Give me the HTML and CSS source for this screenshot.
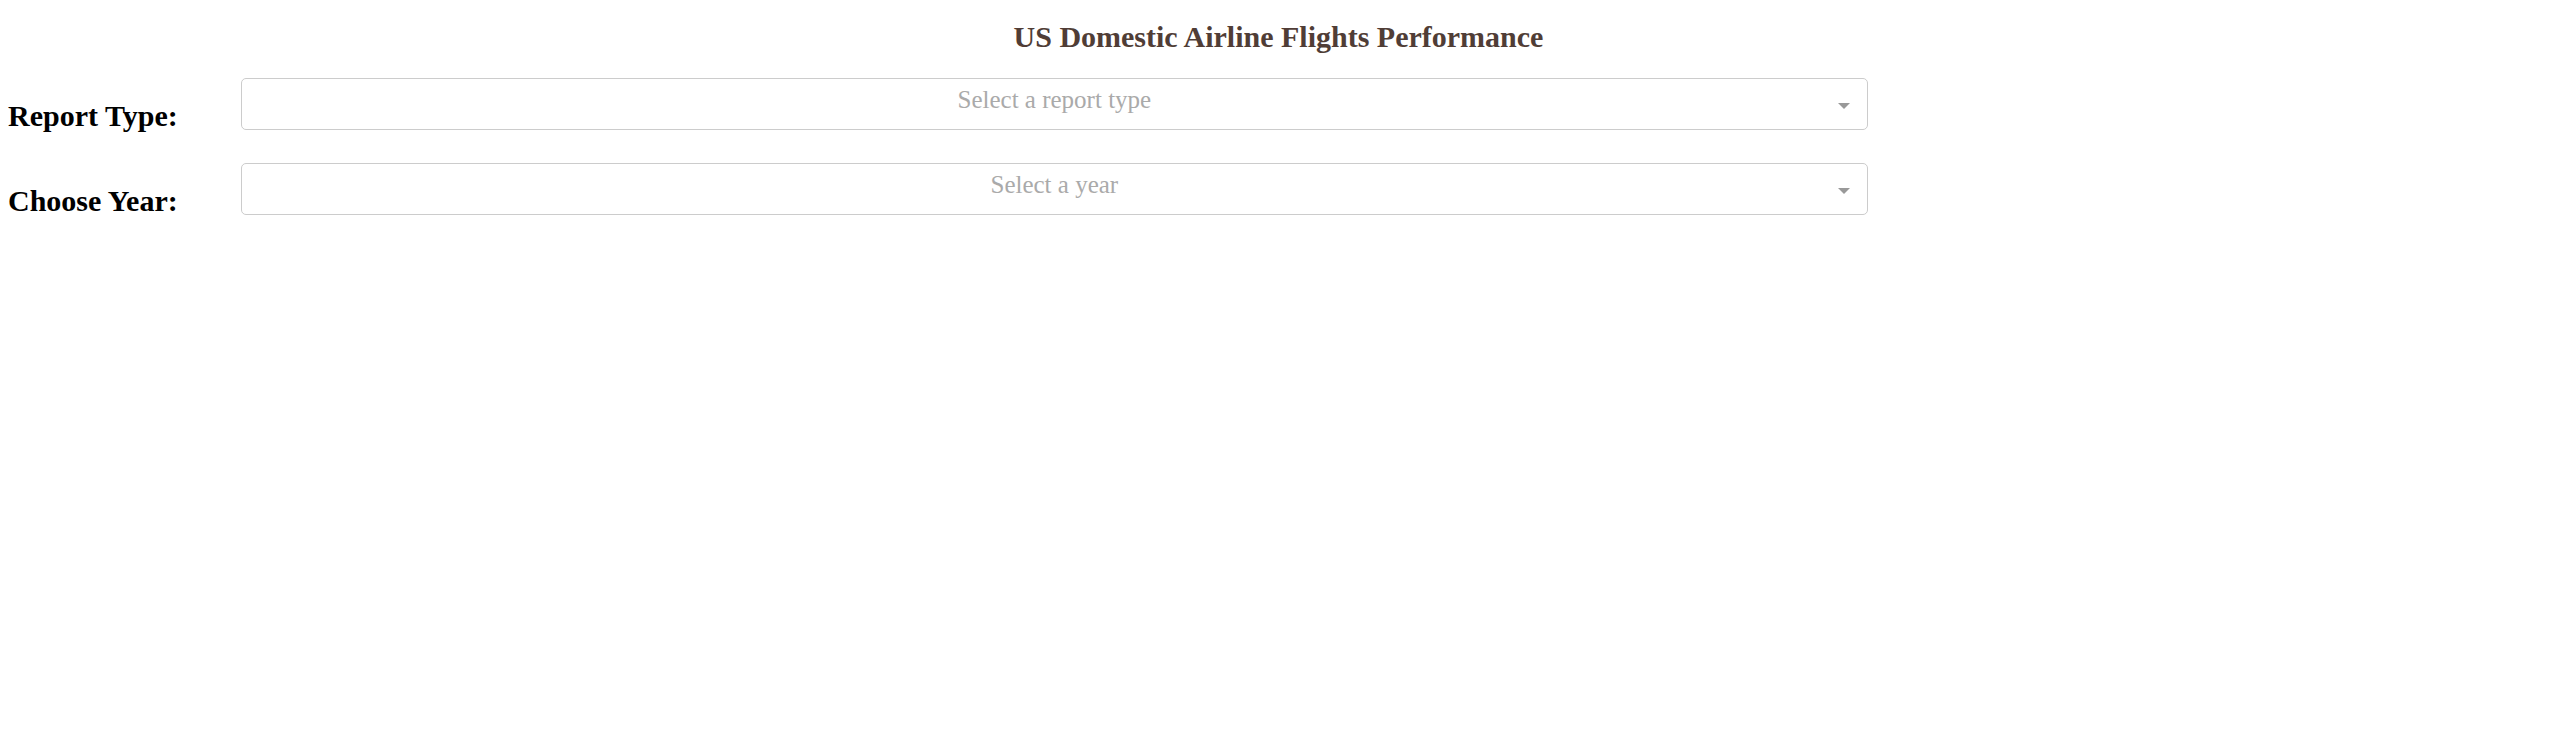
FILE: index.html
```html
<!DOCTYPE html>
<html lang="en">
<head>
<meta charset="utf-8">
<title>US Domestic Airline Flights Performance</title>
<link rel="stylesheet" href="styles.css">
</head>
<body>
  <h1 class="title">US Domestic Airline Flights Performance</h1>
  <div class="form">
    <div class="row">
      <h2 class="label">Report Type:</h2>
      <div class="dropdown">
        <div class="control">
          <div class="placeholder">Select a report type</div>
          <span class="arrow"></span>
        </div>
      </div>
    </div>
    <div class="row">
      <h2 class="label">Choose Year:</h2>
      <div class="dropdown">
        <div class="control">
          <div class="placeholder">Select a year</div>
          <span class="arrow"></span>
        </div>
      </div>
    </div>
  </div>
</body>
</html>
```
FILE: styles.css
```css
html, body {
  margin: 0;
  padding: 0;
  background: #ffffff;
}

body {
  font-family: "Liberation Serif", "Times New Roman", serif;
  padding: 0 8px;
}

.title {
  margin: 20px 0 21px 0;
  font-size: 30px;
  line-height: 34px;
  font-weight: bold;
  color: #503D36;
  text-align: center;
}

.form {
  width: 1860px;
}

.row {
  display: flex;
  align-items: flex-start;
}

.label {
  margin: 24px 60px 27px 0;
  font-size: 30px;
  line-height: 34px;
  font-weight: bold;
  color: #000000;
  white-space: nowrap;
}

.dropdown {
  flex: 1;
  margin-top: 3px;
  margin-left: 3px;
}

.control {
  display: grid;
  grid-template-columns: 1fr;
  box-sizing: border-box;
  height: 52px;
  border: 1px solid #cccccc;
  border-radius: 5px;
  background: #ffffff;
}

.placeholder {
  grid-area: 1 / 1;
  padding-top: 6px;
  font-size: 25px;
  line-height: 30px;
  color: #aaaaaa;
  text-align: center;
}

.arrow {
  grid-area: 1 / 1;
  justify-self: end;
  align-self: start;
  width: 0;
  height: 0;
  margin-top: 24px;
  margin-right: 17px;
  border-style: solid;
  border-width: 6px 6px 0 6px;
  border-color: #999999 transparent transparent transparent;
}
```
